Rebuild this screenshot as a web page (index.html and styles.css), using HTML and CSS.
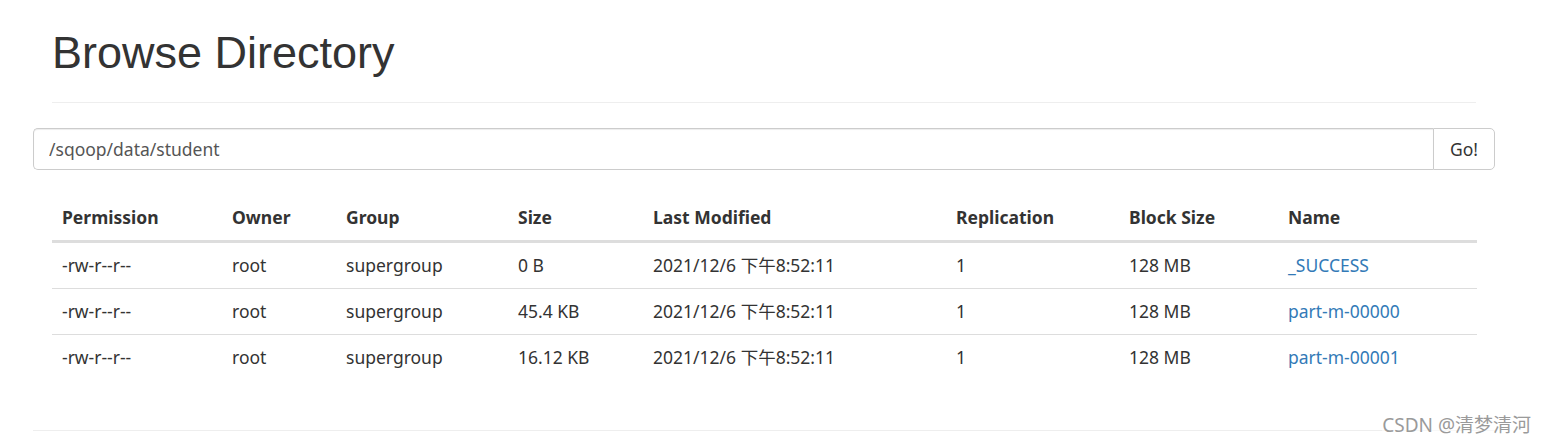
FILE: index.html
```html
<!DOCTYPE html>
<html lang="zh">
<head>
<meta charset="utf-8">
<title>Browsing HDFS</title>
<link rel="stylesheet" href="styles.css">
</head>
<body>
<div class="container">
  <div class="page-header">
    <h1>Browse Directory</h1>
  </div>
  <div class="input-group">
    <input class="form-control" type="text" value="/sqoop/data/student">
    <button class="btn">Go!</button>
  </div>
  <div class="table-wrap">
    <table class="table">
      <colgroup>
        <col class="c-perm"><col class="c-owner"><col class="c-group"><col class="c-size">
        <col class="c-mod"><col class="c-rep"><col class="c-block"><col class="c-name">
      </colgroup>
      <thead>
        <tr>
          <th>Permission</th><th>Owner</th><th>Group</th><th>Size</th>
          <th>Last Modified</th><th>Replication</th><th>Block Size</th><th>Name</th>
        </tr>
      </thead>
      <tbody>
        <tr>
          <td>-rw-r--r--</td><td>root</td><td>supergroup</td><td>0 B</td>
          <td>2021/12/6 下午8:52:11</td><td>1</td><td>128 MB</td><td><a href="#">_SUCCESS</a></td>
        </tr>
        <tr>
          <td>-rw-r--r--</td><td>root</td><td>supergroup</td><td>45.4 KB</td>
          <td>2021/12/6 下午8:52:11</td><td>1</td><td>128 MB</td><td><a href="#">part-m-00000</a></td>
        </tr>
        <tr>
          <td>-rw-r--r--</td><td>root</td><td>supergroup</td><td>16.12 KB</td>
          <td>2021/12/6 下午8:52:11</td><td>1</td><td>128 MB</td><td><a href="#">part-m-00001</a></td>
        </tr>
      </tbody>
    </table>
  </div>
  <hr class="footer-rule">
</div>
<div class="watermark">CSDN @清梦清河</div>
</body>
</html>
```
FILE: styles.css
```css
* { box-sizing: border-box; }
html, body { margin: 0; padding: 0; background: #fff; }
body {
  font-family: "Noto Sans", "Noto Sans CJK SC", sans-serif;
  font-size: 17.5px;
  line-height: 25px;
  color: #333;
  height: 444px;
  overflow: hidden;
  position: relative;
}
.container {
  width: 1462px;
  margin-left: 33px;
}
.page-header {
  margin: 0 19px 0 19px;
  padding: 28px 0 0 0;
  border-bottom: 1px solid #eee;
}
.page-header h1 {
  font-family: "Liberation Sans", Arial, sans-serif;
  font-weight: 400;
  font-size: 45px;
  line-height: 50px;
  margin: 0;
  padding-bottom: 24px;
  color: #333;
}
.input-group {
  display: flex;
  margin-top: 25px;
  height: 42px;
}
.form-control {
  flex: 1;
  height: 42px;
  border: 1px solid #ccc;
  border-right: 0;
  border-radius: 5px 0 0 5px;
  padding: 0 15px;
  font-family: "Noto Sans", "Noto Sans CJK SC", sans-serif;
  font-size: 17.5px;
  color: #555;
  box-shadow: inset 0 1px 1px rgba(0,0,0,0.075);
  outline: none;
}
.btn {
  width: 62px;
  height: 42px;
  border: 1px solid #ccc;
  border-radius: 0 5px 5px 0;
  background: #fff;
  font-family: "Noto Sans", "Noto Sans CJK SC", sans-serif;
  font-size: 17.5px;
  color: #333;
  padding: 0;
}
.table-wrap {
  margin: 25px 18px 49px 19px;
}
.table {
  width: 1425px;
  border-collapse: collapse;
  table-layout: fixed;
}
.c-perm { width: 170px; }
.c-owner { width: 114px; }
.c-group { width: 172px; }
.c-size { width: 135px; }
.c-mod { width: 303px; }
.c-rep { width: 173px; }
.c-block { width: 159px; }
.c-name { width: 199px; }
.table th {
  text-align: left;
  font-weight: 700;
  padding: 10px;
  height: 45px;
  border-bottom: 3px solid #ddd;
  vertical-align: bottom;
  white-space: nowrap;
}
.table td {
  padding: 10px;
  height: 46px;
  border-top: 1px solid #ddd;
  white-space: nowrap;
}
.table tbody tr:first-child td { border-top: 0; height: 45px; }
.table a {
  color: #337ab7;
  text-decoration: none;
}
.footer-rule {
  margin: 0;
  border: 0;
  border-top: 1px solid #eee;
}
.watermark {
  position: absolute;
  right: 15px;
  top: 412px;
  font-family: "Noto Sans", "Noto Sans CJK SC", sans-serif;
  font-size: 19px;
  line-height: 26px;
  color: #9a9a9a;
  background: rgba(255,255,255,0.6);
}
```
